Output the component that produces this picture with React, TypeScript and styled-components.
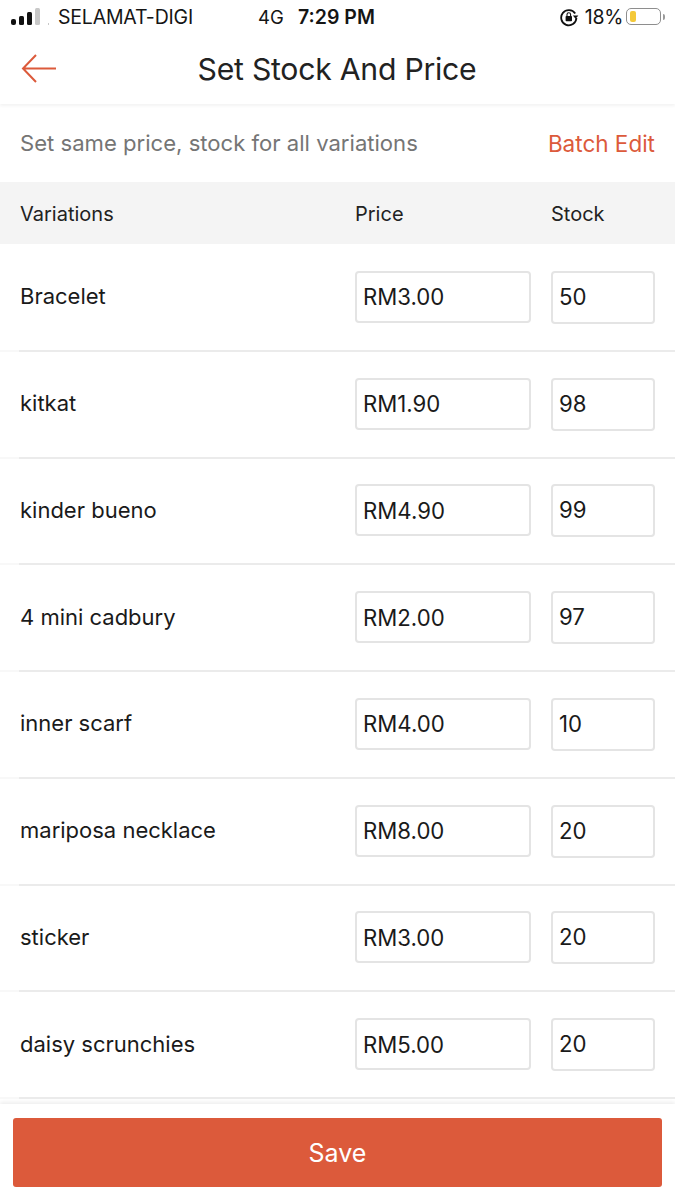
import { createGlobalStyle } from 'styled-components';
import styled from 'styled-components';

const variations = [
  { name: 'Bracelet', price: 'RM3.00', stock: '50' },
  { name: 'kitkat', price: 'RM1.90', stock: '98' },
  { name: 'kinder bueno', price: 'RM4.90', stock: '99' },
  { name: '4 mini cadbury', price: 'RM2.00', stock: '97' },
  { name: 'inner scarf', price: 'RM4.00', stock: '10' },
  { name: 'mariposa necklace', price: 'RM8.00', stock: '20' },
  { name: 'sticker', price: 'RM3.00', stock: '20' },
  { name: 'daisy scrunchies', price: 'RM5.00', stock: '20' },
];

const App = () => (
  <Page>
    <GlobalStyle />
    <StatusBar>
      <StatusLeft>
        <Signal viewBox="0 0 38 18" width="38" height="18">
          <rect x="0" y="11" width="5" height="6" rx="2" fill="#111" />
          <rect x="8" y="8" width="5" height="9" rx="1.5" fill="#111" />
          <rect x="16" y="4" width="5" height="13" rx="1.5" fill="#111" />
          <rect x="24" y="0" width="5" height="17" rx="1.5" fill="#c8c8c8" />
          <rect x="37" y="15" width="1" height="2" fill="#c8c8c8" />
        </Signal>
        <Carrier>SELAMAT-DIGI</Carrier>
      </StatusLeft>
      <Network>4G</Network>
      <Clock>7:29 PM</Clock>
      <StatusRight>
        <svg viewBox="0 0 20 20" width="20" height="20" fill="none">
          <path d="M16.2 6.6A7.6 7.6 0 1 0 17.4 11" stroke="#111" strokeWidth="1.8" />
          <path d="M13.8 8.6h5.6L16.6 11.8z" fill="#111" />
          <rect x="6.6" y="9" width="6.4" height="5.2" rx="0.8" fill="#111" />
          <path d="M8 9V7.6a1.8 1.8 0 0 1 3.6 0V9" stroke="#111" strokeWidth="1.1" />
        </svg>
        <Percent>18%</Percent>
        <Battery>
          <BatteryFill />
        </Battery>
        <BatteryCap />
      </StatusRight>
    </StatusBar>
    <NavBar>
      <BackIcon viewBox="0 0 36 30" width="36" height="30" fill="none">
        <path d="M35 15.5H2M15 2L2 15.5L15 29" stroke="#dc5a3b" strokeWidth="2" />
      </BackIcon>
      <Title>Set Stock And Price</Title>
    </NavBar>
    <BatchRow>
      <BatchHint>Set same price, stock for all variations</BatchHint>
      <BatchLink>Batch Edit</BatchLink>
    </BatchRow>
    <TableHead>
      <NameCell>Variations</NameCell>
      <PriceHead>Price</PriceHead>
      <StockHead>Stock</StockHead>
    </TableHead>
    <List>
      {variations.map((item) => (
        <Row key={item.name}>
          <RowName>{item.name}</RowName>
          <PriceBox>{item.price}</PriceBox>
          <StockBox>{item.stock}</StockBox>
        </Row>
      ))}
    </List>
    <Footer>
      <SaveButton>Save</SaveButton>
    </Footer>
  </Page>
);

export default App;

const GlobalStyle = createGlobalStyle`
  html, body {
    margin: 0;
    padding: 0;
    background: #fff;
  }
  * {
    box-sizing: border-box;
  }
`;

const Page = styled.div`
  width: 675px;
  height: 1200px;
  display: flex;
  flex-direction: column;
  overflow: hidden;
  background: #fff;
  color: #1a1a1a;
  font-family: Inter, 'Liberation Sans', sans-serif;
`;

const StatusBar = styled.div`
  height: 35px;
  flex: none;
  display: flex;
  align-items: center;
  padding: 0 10px 2px 11px;
  font-size: 19px;
  color: #151515;
`;

const StatusLeft = styled.div`
  width: 247px;
  display: flex;
  align-items: center;
  gap: 9px;
`;

const Signal = styled.svg`
  flex: none;
`;

const Carrier = styled.span`
  font-size: 19.5px;
  letter-spacing: -0.2px;
  white-space: nowrap;
`;

const Network = styled.span`
  width: 40px;
  font-size: 18.5px;
`;

const Clock = styled.span`
  font-weight: 600;
  font-size: 19.5px;
`;

const StatusRight = styled.div`
  margin-left: auto;
  display: flex;
  align-items: center;
  gap: 6px;
`;

const Percent = styled.span`
  font-size: 19.5px;
  letter-spacing: -0.3px;
`;

const Battery = styled.div`
  width: 35px;
  height: 17px;
  margin-left: -3px;
  padding: 2px 2px 2px 3px;
  border: 1.5px solid #8e8e8e;
  border-radius: 5px;
`;

const BatteryFill = styled.div`
  width: 6px;
  height: 100%;
  border-radius: 2px;
  background: #f4c93a;
`;

const BatteryCap = styled.div`
  width: 2px;
  height: 6px;
  margin-left: -4px;
  border-radius: 0 2px 2px 0;
  background: #9a9a9a;
`;

const NavBar = styled.div`
  height: 69px;
  flex: none;
  position: relative;
  display: flex;
  align-items: center;
  justify-content: center;
  padding-bottom: 1px;
  box-shadow: 0 2px 3px rgba(0, 0, 0, 0.05);
`;

const BackIcon = styled.svg`
  position: absolute;
  left: 21px;
  top: 18px;
`;

const Title = styled.div`
  font-size: 30.2px;
  letter-spacing: -0.25px;
  margin-left: -1px;
  color: #222;
`;

const BatchRow = styled.div`
  height: 78px;
  flex: none;
  display: flex;
  align-items: center;
  justify-content: space-between;
  padding: 0 20px;
  font-size: 22.5px;
`;

const BatchHint = styled.span`
  font-size: 22.1px;
  color: #757575;
`;

const BatchLink = styled.span`
  color: #dc5a3b;
`;

const TableHead = styled.div`
  height: 62px;
  flex: none;
  display: flex;
  align-items: center;
  padding: 2px 20px 0;
  background: #f4f4f4;
  font-size: 20px;
  color: #222;
`;

const NameCell = styled.div`
  flex: 1;
  min-width: 0;
`;

const RowName = styled(NameCell)`
  padding-bottom: 2px;
`;

const PriceHead = styled.div`
  width: 196px;
`;

const StockHead = styled.div`
  width: 104px;
`;

const List = styled.div`
  flex: 1;
  min-height: 0;
  padding-top: 1px;
  overflow: hidden;
`;

const Row = styled.div`
  height: 106.75px;
  display: flex;
  align-items: center;
  gap: 20px;
  padding: 0 20px;
  border-bottom: 2px solid;
  border-image: linear-gradient(to right, #f8f8f8 20px, #ebebeb 20px) 1;
  font-size: 22px;
  color: #1a1a1a;
`;

const InputBox = styled.div`
  height: 53px;
  display: flex;
  align-items: center;
  padding-left: 6px;
  border: 2px solid #e4e4e4;
  border-radius: 4px;
  background: #fff;
  font-size: 22.2px;
`;

const PriceBox = styled(InputBox)`
  width: 176px;
  height: 52px;
  margin-bottom: 1px;
`;

const StockBox = styled(InputBox)`
  width: 104px;
  padding-bottom: 2px;
`;

const Footer = styled.div`
  height: 96px;
  flex: none;
  padding: 14px 13px 0;
  background: #fff;
  box-shadow: 0 -2px 4px rgba(0, 0, 0, 0.07);
`;

const SaveButton = styled.div`
  height: 69px;
  display: flex;
  align-items: center;
  justify-content: center;
  border-radius: 3px;
  background: #dc5a3b;
  color: #fff;
  font-size: 25px;
`;
